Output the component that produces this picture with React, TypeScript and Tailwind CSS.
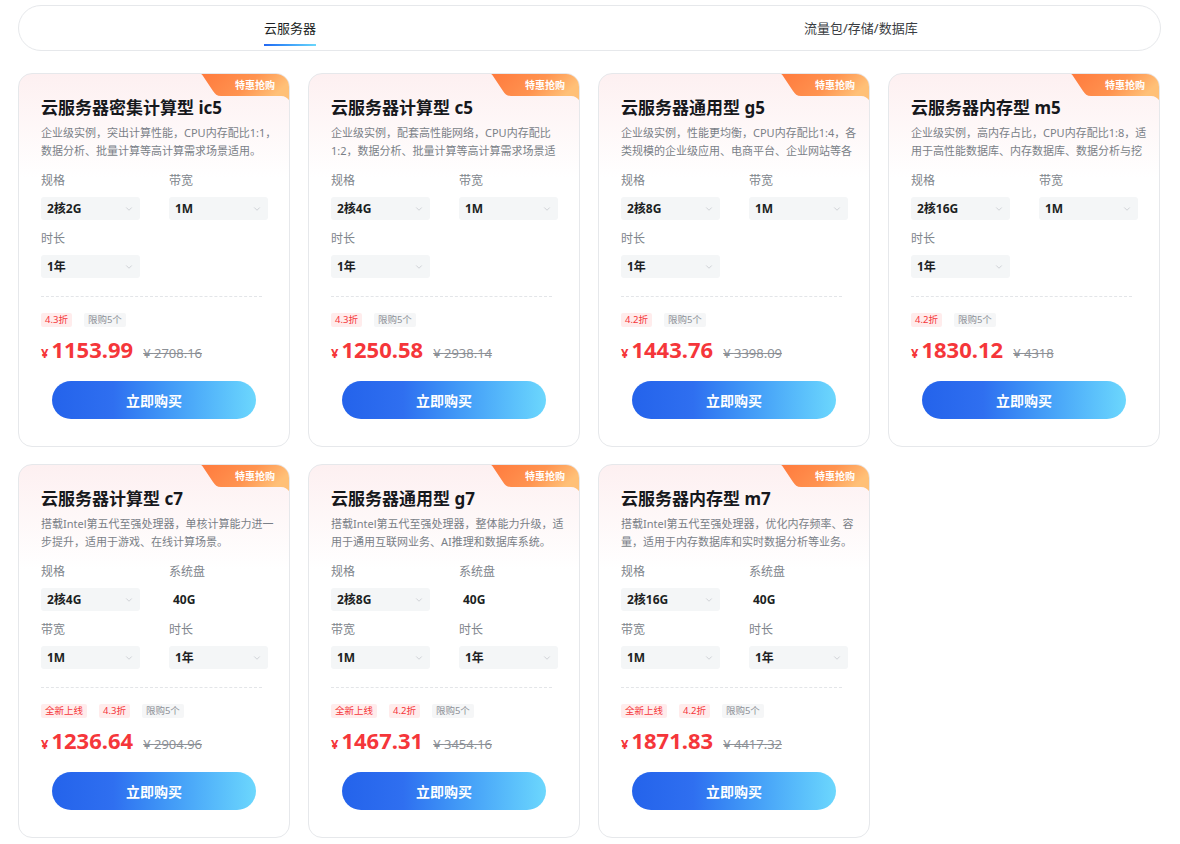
import { ChevronDown } from 'lucide-react';

type Field = { label: string; value: string; plain?: boolean };
type Product = {
  title: string;
  desc: string;
  fields: Field[];
  isNew?: boolean;
  discount: string;
  price: string;
  orig: string;
};

const products: Product[] = [
  {
    title: '云服务器密集计算型 ic5',
    desc: '企业级实例，突出计算性能，CPU内存配比1:1，数据分析、批量计算等高计算需求场景适用。',
    fields: [{ label: '规格', value: '2核2G' }, { label: '带宽', value: '1M' }, { label: '时长', value: '1年' }],
    discount: '4.3折', price: '1153.99', orig: '2708.16',
  },
  {
    title: '云服务器计算型 c5',
    desc: '企业级实例，配套高性能网络，CPU内存配比1:2，数据分析、批量计算等高计算需求场景适用。',
    fields: [{ label: '规格', value: '2核4G' }, { label: '带宽', value: '1M' }, { label: '时长', value: '1年' }],
    discount: '4.3折', price: '1250.58', orig: '2938.14',
  },
  {
    title: '云服务器通用型 g5',
    desc: '企业级实例，性能更均衡，CPU内存配比1:4，各类规模的企业级应用、电商平台、企业网站等各类场景适用。',
    fields: [{ label: '规格', value: '2核8G' }, { label: '带宽', value: '1M' }, { label: '时长', value: '1年' }],
    discount: '4.2折', price: '1443.76', orig: '3398.09',
  },
  {
    title: '云服务器内存型 m5',
    desc: '企业级实例，高内存占比，CPU内存配比1:8，适用于高性能数据库、内存数据库、数据分析与挖掘等场景。',
    fields: [{ label: '规格', value: '2核16G' }, { label: '带宽', value: '1M' }, { label: '时长', value: '1年' }],
    discount: '4.2折', price: '1830.12', orig: '4318',
  },
  {
    title: '云服务器计算型 c7',
    desc: '搭载Intel第五代至强处理器，单核计算能力进一步提升，适用于游戏、在线计算场景。',
    fields: [{ label: '规格', value: '2核4G' }, { label: '系统盘', value: '40G', plain: true }, { label: '带宽', value: '1M' }, { label: '时长', value: '1年' }],
    isNew: true, discount: '4.3折', price: '1236.64', orig: '2904.96',
  },
  {
    title: '云服务器通用型 g7',
    desc: '搭载Intel第五代至强处理器，整体能力升级，适用于通用互联网业务、AI推理和数据库系统。',
    fields: [{ label: '规格', value: '2核8G' }, { label: '系统盘', value: '40G', plain: true }, { label: '带宽', value: '1M' }, { label: '时长', value: '1年' }],
    isNew: true, discount: '4.2折', price: '1467.31', orig: '3454.16',
  },
  {
    title: '云服务器内存型 m7',
    desc: '搭载Intel第五代至强处理器，优化内存频率、容量，适用于内存数据库和实时数据分析等业务。',
    fields: [{ label: '规格', value: '2核16G' }, { label: '系统盘', value: '40G', plain: true }, { label: '带宽', value: '1M' }, { label: '时长', value: '1年' }],
    isNew: true, discount: '4.2折', price: '1871.83', orig: '4417.32',
  },
];

const font = { fontFamily: '"Noto Sans", "Noto Sans CJK SC", sans-serif' };

export default function App() {
  return (
    <div className="bg-white w-[1180px] h-[844px] overflow-hidden" style={font}>
      <div className="ml-[18px] w-[1143px] pt-[5px]">
        {/* tabs */}
        <div className="h-[46px] rounded-full border border-[#e6e8eb] flex items-stretch">
          <div className="ml-[245px] relative flex items-center pt-[1px]">
            <span className="text-[13px] text-[#1c1f23] leading-none">云服务器</span>
            <div className="absolute left-0 right-0 bottom-[4px] h-[2px] bg-gradient-to-r from-[#2468f2] to-[#6ad6fb]" />
          </div>
          <div className="ml-[488px] flex items-center pt-[1px]">
            <span className="text-[13px] text-[#3a3d42] leading-none">流量包/存储/数据库</span>
          </div>
        </div>

        {/* cards */}
        <div className="grid grid-cols-[272px_272px_272px_272px] gap-x-[18px] gap-y-[17px] mt-[22px]">
          {products.map((p) => (
            <Card key={p.title} p={p} />
          ))}
        </div>
      </div>
    </div>
  );
}

function Badge() {
  return (
    <div className="absolute top-0 right-0 w-[88px] h-[26px]">
      <svg width="88" height="26" viewBox="0 0 88 26" className="absolute inset-0">
        <defs>
          <linearGradient id="bdg" x1="0" y1="0" x2="1" y2="0.3">
            <stop offset="0" stopColor="#ff7a3d" />
            <stop offset="0.6" stopColor="#ff9350" />
            <stop offset="1" stopColor="#ffc077" />
          </linearGradient>
        </defs>
        <path d="M0 0 H88 V26 C86 24 84 22 80 22 H20 C16 22 14 20 12 17 L2 2 C1.4 1 0.8 0 0 0 Z" fill="url(#bdg)" />
      </svg>
      <span className="absolute left-[20px] right-0 top-[4px] text-center text-[10px] leading-[14px] font-bold text-white">特惠抢购</span>
    </div>
  );
}

function Card({ p }: { p: Product }) {
  return (
    <div className="relative h-[374px] rounded-[14px] border border-[#e6e8eb] overflow-hidden bg-gradient-to-b from-[#fdf0f1] via-white via-[28%] to-white">
      <Badge />
      <div className="pl-[22px] pr-[21px] pt-[23px]">
        <div className="text-[17px] leading-[22px] font-bold text-[#16181c] whitespace-nowrap">{p.title}</div>
        <div className="mt-[5px] w-[240px] h-[36px] overflow-hidden text-[11px] leading-[18px] text-[#7a7f87]">{p.desc}</div>

        <div className="mt-[12px] grid grid-cols-[128px_100px] gap-y-[10px]">
          {p.fields.map((f) => (
            <div key={f.label}>
              <div className="text-[12px] leading-[18px] text-[#80858c]">{f.label}</div>
              {f.plain ? (
                <div className="mt-[7px] h-[23px] flex items-center pl-[4px] text-[12px] font-bold text-[#1c1f23]">{f.value}</div>
              ) : (
                <div className="mt-[7px] w-[99px] h-[23px] rounded-[3px] bg-[#f4f6f7] flex items-center justify-between pl-[6px] pr-[6px]">
                  <span className="text-[12px] font-bold text-[#1c1f23]">{f.value}</span>
                  <ChevronDown size={10} strokeWidth={1.5} className="text-[#b8bcc2]" />
                </div>
              )}
            </div>
          ))}
        </div>

        <div className="mt-[18px] mr-[6px] border-t border-dashed border-[#e3e5e8]" />

        <div className="mt-[16px] flex items-center gap-[12px]">
          {p.isNew && (
            <span className="px-[4px] h-[14px] leading-[14px] rounded-[2px] bg-[#ffecec] text-[#f5363a] text-[9.5px]">全新上线</span>
          )}
          <span className="px-[4px] h-[14px] leading-[14px] rounded-[2px] bg-[#ffecec] text-[#f5363a] text-[9.5px]">{p.discount}</span>
          <span className="px-[4px] h-[14px] leading-[14px] rounded-[2px] bg-[#f5f6f7] text-[#8c9096] text-[9.5px]">限购5个</span>
        </div>

        <div className="mt-[8px] flex items-baseline h-[28px]">
          <span className="text-[13px] font-bold text-[#f5363a] mr-[3px]">¥</span>
          <span className="text-[22px] leading-[28px] font-bold text-[#f5363a]">{p.price}</span>
          <span className="ml-[10px] text-[13px] text-[#8c9096] line-through">¥ {p.orig}</span>
        </div>
      </div>

      <div className="mt-[18px] flex justify-center">
        <button className="w-[204px] h-[38px] rounded-full bg-gradient-to-r from-[#2463eb] via-[#2f6ff0] via-[30%] to-[#6cd7fd] text-white text-[14px] font-bold">
          立即购买
        </button>
      </div>
    </div>
  );
}
